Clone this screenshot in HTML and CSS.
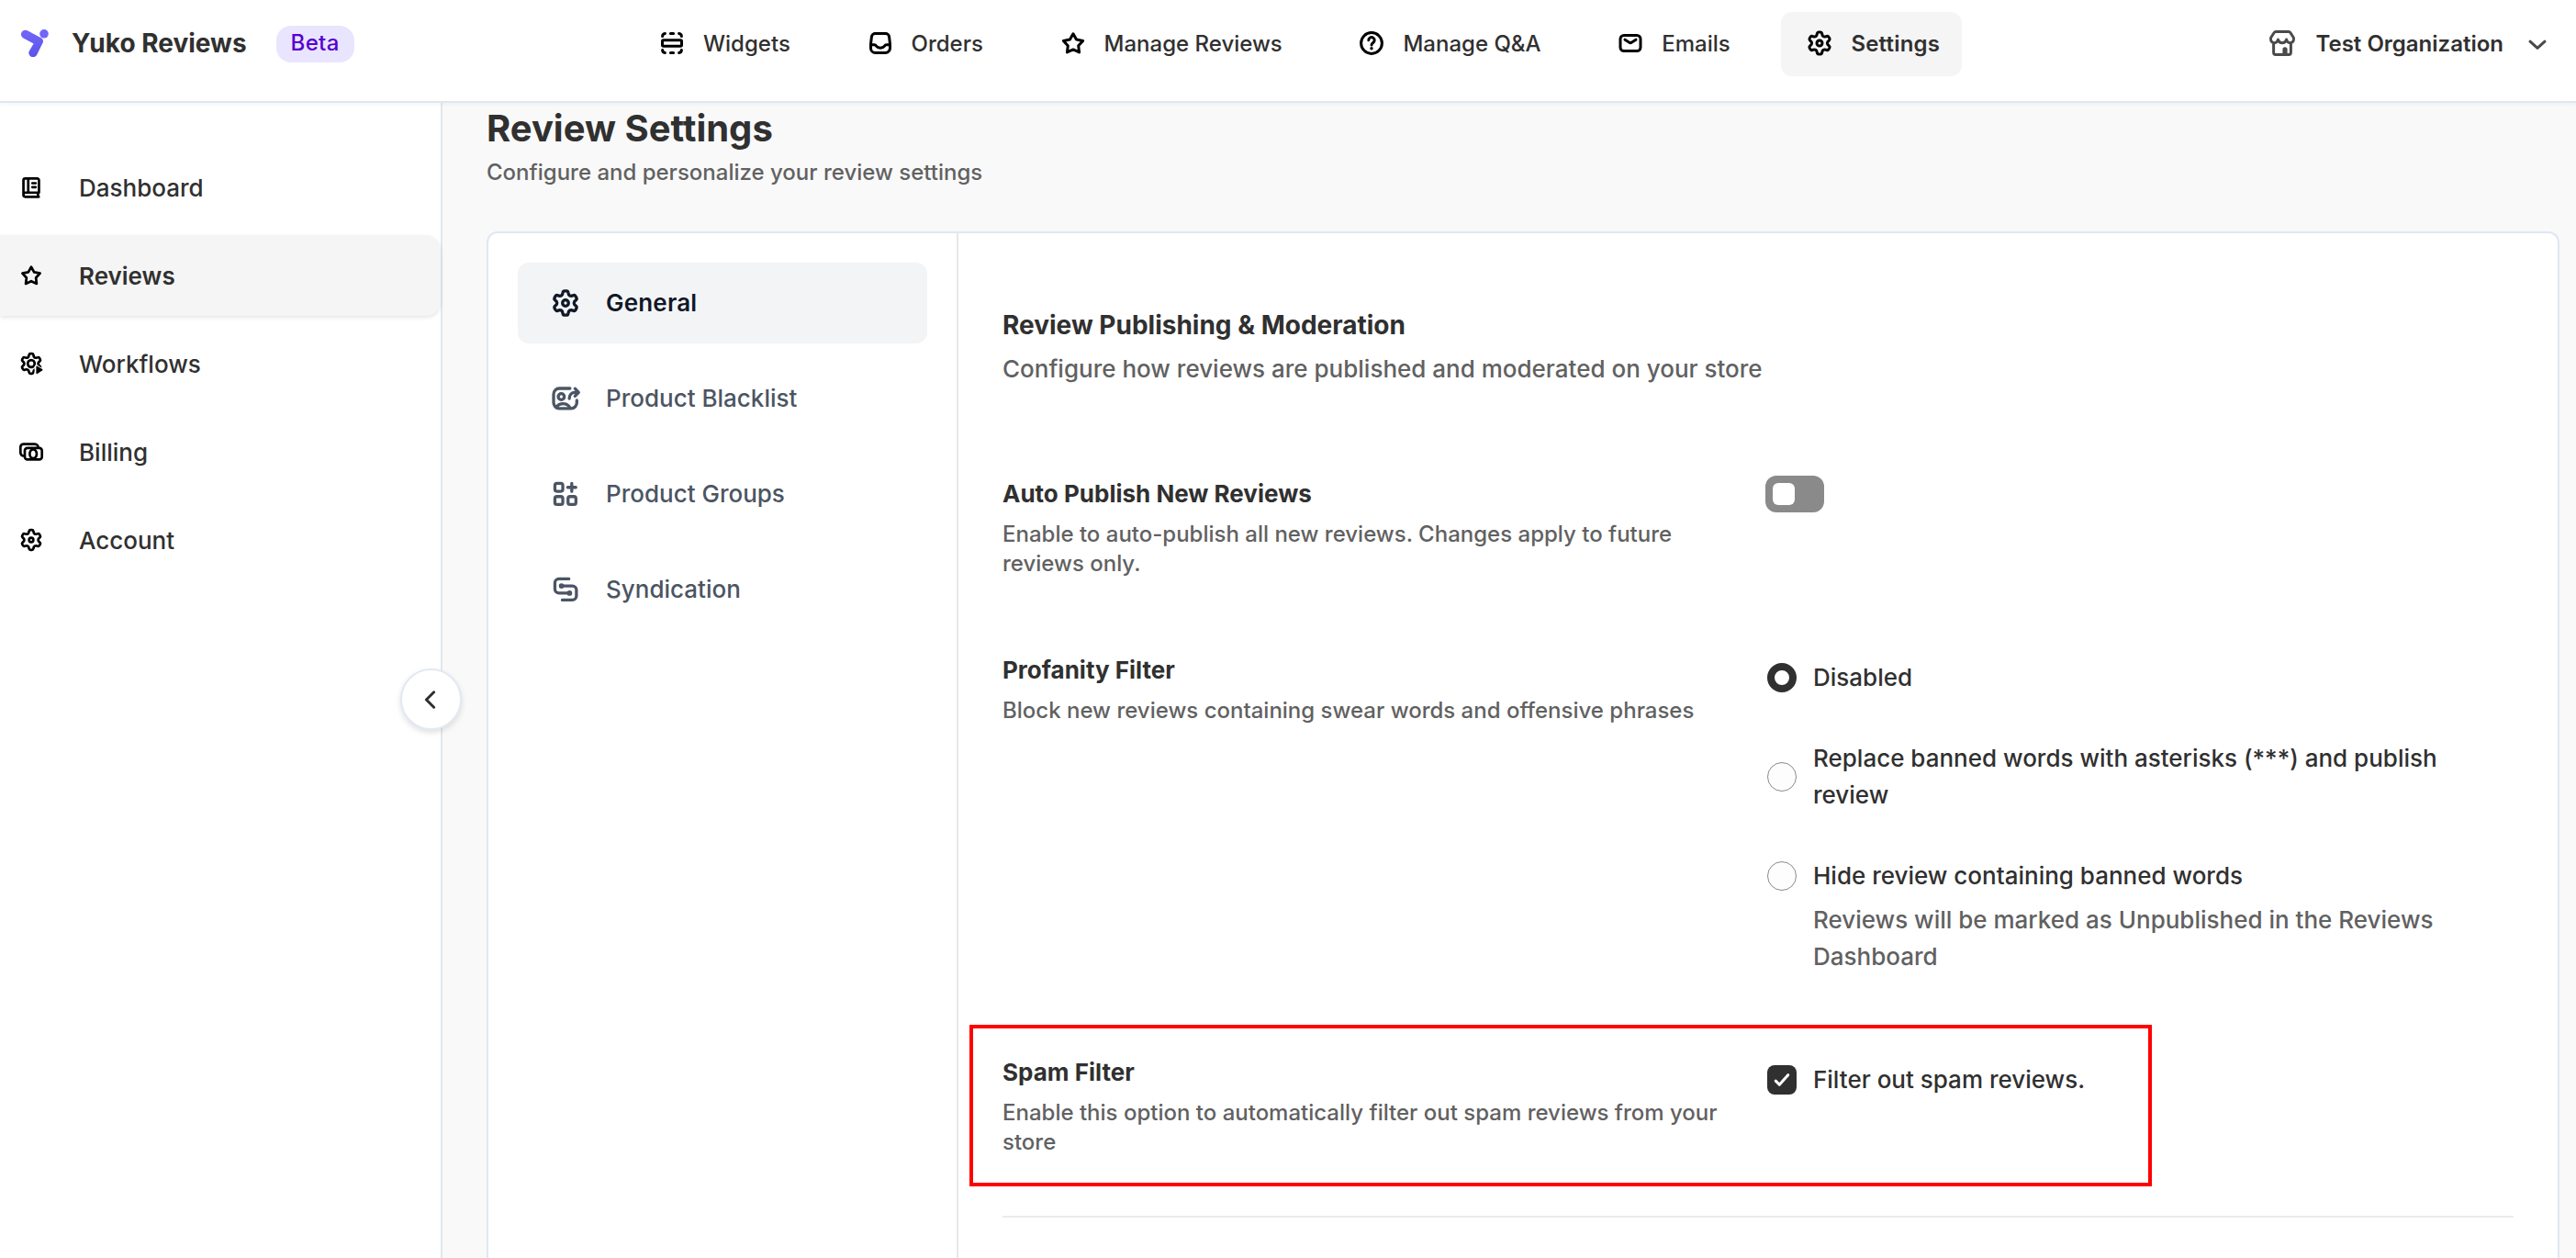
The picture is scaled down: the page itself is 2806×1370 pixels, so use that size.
FILE: index.html
```html
<!DOCTYPE html>
<html lang="en">
<head>
<meta charset="utf-8">
<title>Yuko Reviews – Review Settings</title>
<link rel="stylesheet" href="styles.css">
</head>
<body>
<svg class="sprite" aria-hidden="true">
  <symbol id="gear" viewBox="-10 -10 20 20">
    <path d="M-1.6-4.15L-1.3-5.3Q-1.15-6-.5-6L.5-6Q1.15-6 1.3-5.3L1.6-4.15Q2-3.46 2.79-3.46L3.94-3.78Q4.62-4 4.95-3.43L5.45-2.57Q5.77-2 5.24-1.52L4.39-.69Q4 0 4.39.69L5.24 1.52Q5.77 2 5.45 2.57L4.95 3.43Q4.62 4 3.94 3.78L2.79 3.46Q2 3.46 1.6 4.15L1.3 5.3Q1.15 6 .5 6L-.5 6Q-1.15 6-1.3 5.3L-1.6 4.15Q-2 3.46-2.79 3.46L-3.94 3.78Q-4.62 4-4.95 3.43L-5.45 2.57Q-5.77 2-5.24 1.52L-4.39.69Q-4 0-4.39-.69L-5.24-1.52Q-5.77-2-5.45-2.57L-4.95-3.43Q-4.62-4-3.94-3.78L-2.79-3.46Q-2-3.46-1.6-4.15Z"/>
  </symbol>
  <symbol id="star" viewBox="0 0 20 20">
    <path d="M10 4.85L11.76 8.02L15.33 8.72L12.85 11.38L13.29 14.98L10 13.45L6.71 14.98L7.15 11.38L4.67 8.72L8.24 8.02Z"/>
  </symbol>
</svg>

<header class="topbar">
  <div class="brand">
    <svg class="logo" viewBox="0 0 30 30">
      <defs><linearGradient id="lg" x1="0" y1="0" x2="0" y2="1"><stop offset="0" stop-color="#7166f8"/><stop offset="1" stop-color="#5c53ea"/></linearGradient></defs>
      <path fill="url(#lg)" d="M6.8 1.3L22.2 9.6Q25.2 11.6 23.4 15L17.4 27.3A4.7 4.7 0 0 1 8.6 24L13.6 15.6L2.4 9.5A4.6 4.6 0 0 1 6.8 1.3Z"/>
      <circle cx="25" cy="4.8" r="4.8" fill="#7166f8"/>
    </svg>
    <span class="brand-name">Yuko Reviews</span>
    <span class="badge">Beta</span>
  </div>
  <nav class="topnav">
    <a class="tab"><svg class="icon" viewBox="0 0 20 20"><rect x="4.75" y="8.4" width="10.5" height="3.2" rx=".6"/><path d="M4.8 6.3A1.6 1.6 0 0 1 6.2 4.75M9.2 4.75h1.6M13.8 4.75A1.6 1.6 0 0 1 15.2 6.3M4.8 13.7A1.6 1.6 0 0 0 6.2 15.25M9.2 15.25h1.6M13.8 15.25A1.6 1.6 0 0 0 15.2 13.7"/></svg>Widgets</a>
    <a class="tab"><svg class="icon" viewBox="0 0 20 20"><path d="M7.2 4.75h5.6a2 2 0 0 1 2 1.8l.45 4v2.2a2.5 2.5 0 0 1-2.5 2.5h-5.5a2.5 2.5 0 0 1-2.5-2.5v-2.2l.45-4a2 2 0 0 1 2-1.8zM4.8 10.9h1.8c.6 0 1 .3 1.3.8.4.6.8.9 2.1.9s1.7-.3 2.1-.9c.3-.5.7-.8 1.3-.8h1.8"/></svg>Orders</a>
    <a class="tab"><svg class="icon"><use href="#star"/></svg>Manage Reviews</a>
    <a class="tab"><svg class="icon" viewBox="0 0 20 20"><circle cx="10" cy="10" r="5.7"/><path d="M8.4 8.4a1.6 1.6 0 1 1 2.4 1.4c-.5.3-.8.6-.8 1.2"/><circle class="solid" cx="10" cy="12.9" r=".85"/></svg>Manage Q&amp;A</a>
    <a class="tab"><svg class="icon" viewBox="0 0 20 20"><rect x="4.5" y="5.75" width="11" height="8.5" rx="2"/><path d="M7 8.1L9.4 9.6Q10 10 10.6 9.6L13 8.1"/></svg>Emails</a>
    <a class="tab active"><svg class="icon" viewBox="0 0 20 20"><use href="#gear" width="20" height="20"/><circle cx="10" cy="10" r="1.5"/></svg>Settings</a>
  </nav>
  <div class="org">
    <svg class="icon" viewBox="0 0 20 20"><path d="M6.5 3.75h7c.4 0 .7.2.9.5l1.7 2.6c.5 1.1 0 2.7-1.5 3-1.2.2-2.1-.6-2.3-1.8-.3 1.1-1.2 1.8-2.3 1.8s-2-.7-2.3-1.8c-.2 1.2-1.1 2-2.3 1.8-1.5-.3-2-1.9-1.5-3l1.7-2.6c.2-.3.5-.5.9-.5zM5.3 10.4v4.6c0 .7.4 1.2 1.1 1.2h7.2c.7 0 1.1-.5 1.1-1.2v-4.6"/><path class="solid" d="M10.2 16v-2.6a1.3 1.3 0 0 1 2.6 0V16z"/></svg>
    <span class="org-name">Test Organization</span>
    <svg class="icon" viewBox="0 0 20 20"><path d="M6 9.1L10 12.7L14 9.1"/></svg>
  </div>
</header>

<div class="shell">
  <aside class="sidebar">
    <a class="side-item"><svg class="icon" viewBox="0 0 20 20"><path d="M14.7 13.2V5.75a1.1 1.1 0 0 0-1.1-1.1H6.4a1.1 1.1 0 0 0-1.1 1.1v8.9a1.1 1.1 0 0 0 1.1 1.1h8.2M5.3 14.4a1.2 1.2 0 0 1 1.2-1.2h8.2M14.1 13.4v2.2M8.2 4.8v8.2M10.7 7.5h2M10.7 9.9h2"/></svg>Dashboard</a>
    <a class="side-item active"><svg class="icon"><use href="#star"/></svg>Reviews</a>
    <a class="side-item"><svg class="icon" viewBox="0 0 20 20"><use href="#gear" width="20" height="20"/><circle cx="10" cy="10" r="2.1"/><path class="cutout" d="M13.2 12v4.2l3.4-2.1z"/><path class="solid" d="M13 11.900q0-.8.7-.4l3 1.900q.6.400 0 .8l-3 1.900q-.7.400-.7-.4z"/></svg>Workflows</a>
    <a class="side-item"><svg class="icon" viewBox="0 0 20 20"><path d="M14.2 7.4a2 2 0 0 0-2-2.1H5.4a1.9 1.9 0 0 0-1.9 1.9v3.4a1.9 1.9 0 0 0 1.9 1.9"/><rect x="6.1" y="7.7" width="10.4" height="7" rx="1.6"/><ellipse cx="11.2" cy="11.2" rx="2.1" ry="2.7"/></svg>Billing</a>
    <a class="side-item"><svg class="icon" viewBox="0 0 20 20"><use href="#gear" width="20" height="20"/><circle cx="10" cy="10" r="1.3"/></svg>Account</a>
    <button class="collapse" aria-label="Collapse"><svg class="icon" viewBox="0 0 20 20"><path d="M11.3 5.9L7.2 10L11.3 14.1"/></svg></button>
  </aside>

  <main class="main">
    <h1>Review Settings</h1>
    <p class="subtitle">Configure and personalize your review settings</p>
    <section class="card">
      <nav class="menu">
        <a class="menu-item active"><svg class="icon" viewBox="0 0 20 20"><use href="#gear" width="20" height="20"/><circle cx="10" cy="10" r="1.5"/></svg>General</a>
        <a class="menu-item"><svg class="icon" viewBox="0 0 20 20"><path d="M12.2 5H6.9a2.8 2.8 0 0 0-2.8 2.8v4.3a2.8 2.8 0 0 0 2.8 2.8h5.9a2.8 2.8 0 0 0 2.8-2.8v-1.2M5.5 14.2c.7-1 1.8-1.6 3.2-1.6s2.6.6 3.3 1.6M11.9 10v-.3a2.7 2.7 0 0 1 2.7-2.7h1.5M14.7 5.1l1.8 1.85-1.8 1.85"/><circle cx="7.9" cy="9.1" r="1.5"/></svg>Product Blacklist</a>
        <a class="menu-item"><svg class="icon" viewBox="0 0 20 20"><rect x="4.75" y="4.75" width="3.9" height="3.9" rx="1"/><rect x="4.75" y="11.25" width="3.9" height="3.9" rx="1"/><rect x="11.25" y="11.25" width="3.9" height="3.9" rx="1"/><path d="M13.1 4.7v4M11.1 6.7h4"/></svg>Product Groups</a>
        <a class="menu-item"><svg class="icon" viewBox="0 0 20 20"><path d="M11.7 4.75H6.75a2 2 0 0 0-2 2V9.8a2 2 0 0 0 2 2H12M8 8.2h5.4a2 2 0 0 1 2 2v3a2 2 0 0 1-2 2H8.4"/><circle class="solid" cx="8" cy="8.2" r="1.3"/><circle class="solid" cx="12" cy="11.8" r="1.3"/></svg>Syndication</a>
      </nav>
      <div class="pane">
        <h2>Review Publishing &amp; Moderation</h2>
        <p class="lead">Configure how reviews are published and moderated on your store</p>

        <div class="row">
          <div>
            <h3>Auto Publish New Reviews</h3>
            <p class="desc">Enable to auto-publish all new reviews. Changes apply to future reviews only.</p>
          </div>
          <div><span class="toggle"><span class="knob"></span></span></div>
        </div>

        <div class="row profanity">
          <div>
            <h3>Profanity Filter</h3>
            <p class="desc">Block new reviews containing swear words and offensive phrases</p>
          </div>
          <div class="choices">
            <label class="choice"><span class="radio checked"></span><span>Disabled</span></label>
            <label class="choice"><span class="radio"></span><span>Replace banned words with asterisks (***) and publish review</span></label>
            <div>
              <label class="choice"><span class="radio"></span><span>Hide review containing banned words</span></label>
              <p class="help">Reviews will be marked as Unpublished in the Reviews Dashboard</p>
            </div>
          </div>
        </div>

        <div class="row spam">
          <div>
            <h3>Spam Filter</h3>
            <p class="desc">Enable this option to automatically filter out spam reviews from your store</p>
          </div>
          <div class="choices">
            <label class="choice"><span class="checkbox"><svg viewBox="0 0 32 32"><path d="M9.2 17.1L13.3 21.3L22.7 10.7"/></svg></span><span>Filter out spam reviews.</span></label>
          </div>
        </div>
        <hr>
      </div>
    </section>
  </main>
</div>
</body>
</html>
```

FILE: styles.css
```css
*, *::after { box-sizing: border-box; }

body {
  margin: 0;
  height: 1370px;
  overflow: hidden;
  display: flex;
  flex-direction: column;
  background: #f9f9f9;
  color: #303030;
  font-family: Inter, "Liberation Sans", sans-serif;
  font-size: 26px;
  font-weight: 500;
}

h1, h2, h3, p { margin: 0; }

.sprite { position: absolute; width: 0; height: 0; }

.icon {
  width: 40px;
  height: 40px;
  flex: none;
  fill: none;
  stroke: currentColor;
  stroke-width: 1.5;
  stroke-linecap: round;
  stroke-linejoin: round;
}
.icon .solid { fill: currentColor; stroke: none; }
.icon .cutout { stroke: #fff; stroke-width: 2.4; fill: #fff; }

/* Top bar */
.topbar {
  position: relative;
  z-index: 2;
  flex: none;
  height: 112px;
  display: flex;
  align-items: flex-start;
  padding-top: 13px;
  background: #fff;
  border-bottom: 2px solid #dfe7f1;
  box-shadow: 0 2px 4px rgba(0, 0, 0, .04);
  font-size: 24px;
}
.brand {
  width: 690px;
  height: 68px;
  padding-left: 23px;
  display: flex;
  align-items: center;
}
.logo { width: 30px; height: 30px; }
.brand-name {
  margin-left: 25px;
  font-size: 28px;
  font-weight: 700;
}
.badge {
  margin-left: 32px;
  margin-top: 2px;
  height: 40px;
  padding: 0 16px;
  border-radius: 16px;
  background: #e9e5ff;
  color: #5700d1;
  line-height: 38px;
  letter-spacing: .3px;
}
.topnav { display: flex; gap: 31.7px; }
.tab {
  height: 70px;
  padding: 0 24px 2px 22px;
  display: flex;
  align-items: center;
  gap: 14px;
  border-radius: 12px;
}
.tab .icon, .side-item .icon { color: #000; }
.tab.active {
  background: #f5f5f5;
  font-weight: 600;
  letter-spacing: .2px;
}
.org {
  height: 68px;
  margin-left: auto;
  padding-right: 22px;
  display: flex;
  align-items: center;
  gap: 17px;
  font-weight: 600;
}
.org .icon { color: #4a4a4a; }

/* Page body */
.shell { flex: 1; min-height: 0; display: flex; }

.sidebar {
  position: relative;
  flex: none;
  width: 482px;
  padding-top: 48px;
  display: flex;
  flex-direction: column;
  gap: 8px;
  background: #fff;
  border-right: 2px solid #e1e7f1;
}
.side-item {
  height: 88px;
  padding-left: 16px;
  display: flex;
  align-items: center;
  gap: 34px;
  border-radius: 0 16px 16px 0;
}
.side-item .icon { width: 36px; height: 36px; }
.side-item.active {
  background: #f5f5f5;
  font-weight: 600;
  box-shadow: 0 2px 4px rgba(0, 0, 0, .1);
}
.collapse {
  position: absolute;
  top: 616px;
  right: -23px;
  width: 67px;
  height: 67px;
  padding: 0;
  display: grid;
  place-items: center;
  border: 2px solid #e3e9f3;
  border-radius: 50%;
  background: #fff;
  box-shadow: 0 3px 6px rgba(0, 0, 0, .12);
  color: #303030;
}

.main {
  flex: 1;
  padding: 6px 18px 0 48px;
  display: flex;
  flex-direction: column;
}
h1 { font-size: 40px; line-height: 44px; font-weight: 700; }
.subtitle { margin-top: 6px; font-size: 24px; line-height: 40px; color: #616161; }

.card {
  margin-top: 44px;
  flex: 1;
  min-height: 0;
  display: flex;
  background: #fff;
  border: 2px solid #dfe7f1;
  border-bottom: 0;
  border-radius: 12px 12px 0 0;
}
.menu {
  width: 512px;
  padding: 32px;
  display: flex;
  flex-direction: column;
  gap: 16px;
  border-right: 2px solid #e5e7eb;
}
.menu-item {
  height: 88px;
  padding: 0 30px 2px;
  display: flex;
  align-items: center;
  gap: 22px;
  border-radius: 12px;
  color: #4b5563;
}
.menu-item .icon { width: 44px; height: 44px; margin-top: 2px; }
.menu-item.active { background: #f3f4f6; color: #111827; font-weight: 600; letter-spacing: .2px; }

/* Settings pane */
.pane { flex: 1; padding: 80px 48px 0; }
h2 { font-size: 28px; line-height: 40px; font-weight: 700; }
.lead { margin-top: 8px; line-height: 40px; color: #616161; }
.row {
  position: relative;
  margin-top: 96px;
  display: grid;
  grid-template-columns: 1fr 1fr;
  column-gap: 16px;
}
.row.profanity { margin-top: 80px; }
.row.spam { margin-top: 86px; }
h3 { font-size: 26px; line-height: 40px; font-weight: 700; }
.desc { margin-top: 8px; font-size: 24px; line-height: 32px; color: #616161; }

.toggle {
  display: flex;
  align-items: center;
  width: 64px;
  height: 40px;
  padding: 8px;
  border-radius: 12px;
  background: #8a8a8a;
}
.knob { width: 24px; height: 24px; border-radius: 6px; background: #fff; }

.choices {
  padding: 8px 0 0 2px;
  display: flex;
  flex-direction: column;
  gap: 48px;
  line-height: 40px;
}
.choice { display: flex; align-items: center; gap: 18px; }
.radio, .checkbox { flex: none; width: 32px; height: 32px; }
.radio {
  border: 1.5px solid #8a8a8a;
  border-radius: 50%;
  background: #fdfdfd;
}
.radio.checked { border: 8px solid #303030; background: #fff; }
.checkbox { border-radius: 8px; background: #303030; }
.checkbox svg { display: block; fill: none; stroke: #fff; stroke-width: 3; stroke-linecap: round; stroke-linejoin: round; }
.help { margin-top: 8px; padding-left: 50px; color: #616161; }

/* Highlight frame drawn over the spam filter row */
.spam::after {
  content: "";
  position: absolute;
  left: -36px;
  top: -32px;
  width: 1288px;
  height: 176px;
  border: 4px solid #f00;
}
hr {
  height: 2px;
  margin: 64px 0 0;
  border: 0;
  background: #ebebeb;
}
```
